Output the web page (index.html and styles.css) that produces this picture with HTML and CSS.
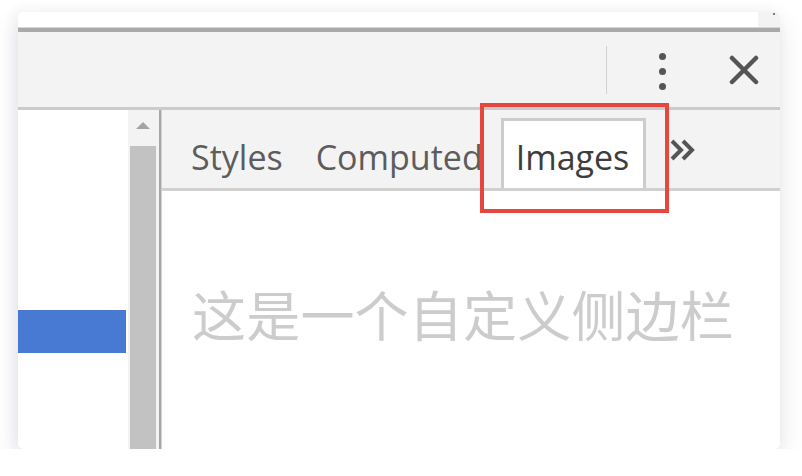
FILE: index.html
```html
<!DOCTYPE html>
<html lang="zh">
<head>
<meta charset="utf-8">
<title>DevTools custom sidebar</title>
<link rel="stylesheet" href="styles.css">
</head>
<body>
<div class="card">
  <div class="topstrip"><div class="topstrip-end"><span class="tiny-dot"></span></div></div>
  <div class="toolbar">
    <span class="sep"></span>
    <span class="kebab"><i></i><i></i><i></i></span>
    <span class="close">
      <svg width="30" height="30" viewBox="0 0 30 30"><path d="M3 3 L27 27 M27 3 L3 27" stroke="#555" stroke-width="4.5" stroke-linecap="round" fill="none"/></svg>
    </span>
  </div>
  <div class="main">
    <div class="left">
      <div class="selected-row"></div>
    </div>
    <div class="scrollbar">
      <div class="arrow-area"><span class="arrow"></span></div>
      <div class="thumb"></div>
    </div>
    <div class="divider"></div>
    <div class="panel">
      <div class="tabbar">
        <span class="tab">Styles</span>
        <span class="tab">Computed</span>
        <span class="tab active">Images</span>
        <span class="more">
          <svg width="28" height="26" viewBox="0 0 28 26"><path d="M3 4 L12 13 L3 22 M14 4 L23 13 L14 22" stroke="#555" stroke-width="4" fill="none" stroke-linejoin="miter"/></svg>
        </span>
        <span class="highlight"></span>
      </div>
      <div class="content">这是一个自定义侧边栏</div>
    </div>
  </div>
</div>
</body>
</html>
```
FILE: styles.css
```css
html, body {
  margin: 0;
  padding: 0;
  background: #ffffff;
}
body {
  padding: 12px 22px 0 18px;
  font-family: "Open Sans", "Noto Sans", sans-serif;
}
.card {
  width: 762px;
  height: 437px;
  border-radius: 6px;
  overflow: hidden;
  background: #ffffff;
  box-shadow: 0 10px 24px rgba(40, 50, 90, 0.13), -4px 0 14px rgba(40, 50, 90, 0.05);
  display: flex;
  flex-direction: column;
}
.topstrip {
  height: 15px;
  background: #ffffff;
  border-bottom: 1px solid #d6d6d6;
  display: flex;
  justify-content: flex-end;
  flex: none;
}
.topstrip-end {
  width: 22px;
  background: #f3f3f3;
  position: relative;
}
.tiny-dot {
  position: absolute;
  right: 5px;
  top: 1px;
  width: 2px;
  height: 2px;
  background: #555;
  border-radius: 1px;
}
.toolbar {
  flex: none;
  height: 75px;
  background: #f3f3f3;
  border-top: 4px solid #a9a9a9;
  border-bottom: 3px solid #cbcbcb;
  display: flex;
  align-items: center;
  justify-content: flex-end;
}
.sep {
  width: 1px;
  height: 48px;
  background: #cfcfcf;
  margin-right: 35px;
}
.kebab {
  width: 40px;
  height: 40px;
  display: flex;
  flex-direction: column;
  align-items: center;
  justify-content: center;
  gap: 8px;
  margin-top: 3px;
}
.kebab i {
  display: block;
  width: 7px;
  height: 7px;
  border-radius: 50%;
  background: #555;
}
.close {
  width: 40px;
  height: 40px;
  display: flex;
  align-items: center;
  justify-content: center;
  margin-left: 42px;
  margin-right: 16px;
}
.main {
  flex: 1;
  display: flex;
  min-height: 0;
}
.left {
  width: 110px;
  background: #ffffff;
  flex: none;
}
.selected-row {
  margin-top: 200px;
  width: 108px;
  height: 43px;
  background: #487ad4;
}
.scrollbar {
  width: 31px;
  flex: none;
  background: #f3f3f3;
  display: flex;
  flex-direction: column;
}
.arrow-area {
  height: 36px;
  display: flex;
  align-items: center;
  justify-content: center;
  flex: none;
}
.arrow {
  width: 0;
  height: 0;
  border-left: 7px solid transparent;
  border-right: 7px solid transparent;
  border-bottom: 7px solid #a3a3a3;
  margin-left: -2px;
  margin-top: -6px;
}
.thumb {
  flex: 1;
  margin: 0 3px 0 2px;
  background: #c2c2c2;
}
.divider {
  width: 2px;
  flex: none;
  background: #a6a6a6;
}
.panel {
  flex: 1;
  display: flex;
  flex-direction: column;
  border-left: 1px solid #d2d2d2;
}
.tabbar {
  position: relative;
  flex: none;
  height: 78px;
  background: #f3f3f3;
  border-bottom: 3px solid #d0d0d0;
  display: flex;
  align-items: flex-end;
  padding-left: 14px;
  gap: 3px;
}
.tab {
  box-sizing: border-box;
  height: 70px;
  padding: 19px 12px 0 12px;
  border: 3px solid transparent;
  border-bottom: 0;
  font-size: 34px;
  line-height: 34px;
  color: #5c5c5c;
  white-space: nowrap;
}
.tab.active {
  background: #ffffff;
  border-color: #cccccc;
  color: #3d3d3d;
  padding-right: 14px;
}
.more {
  align-self: center;
  margin-left: 20px;
  margin-top: 2px;
  display: flex;
}
.highlight {
  position: absolute;
  left: 318px;
  top: -7px;
  width: 181px;
  height: 102px;
  border: 4px solid #e8453c;
}
.content {
  flex: 1;
  background: #ffffff;
  padding: 96px 0 0 30px;
  font-family: "Noto Sans CJK SC", "Noto Sans", sans-serif;
  font-size: 54px;
  line-height: 54px;
  letter-spacing: 0.2px;
  color: #cccccc;
  white-space: nowrap;
}
```
